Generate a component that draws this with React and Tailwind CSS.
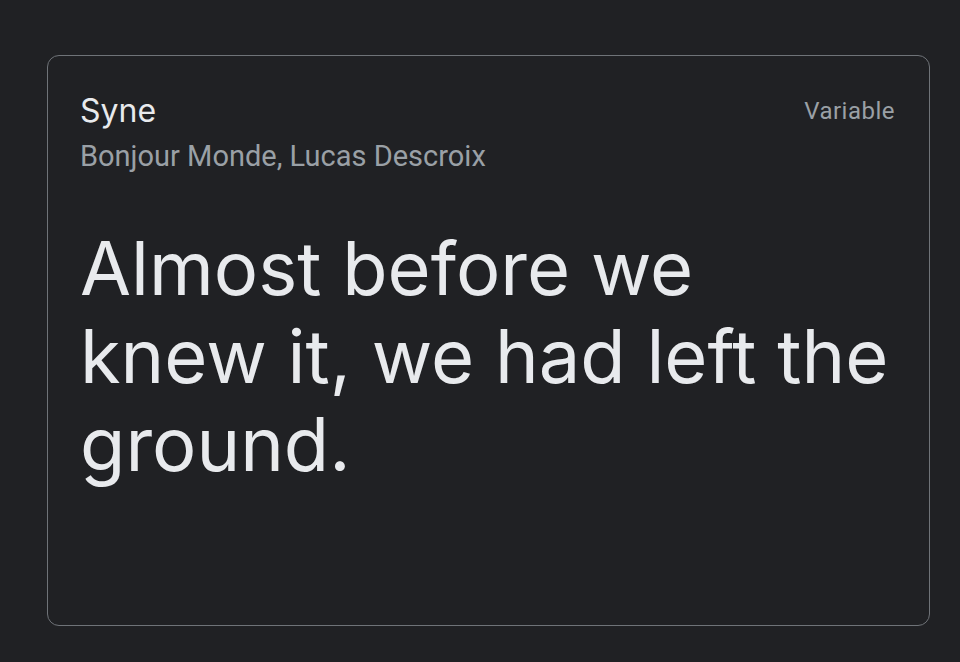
export default function App() {
  return (
    <main className="min-h-screen w-full bg-[#202124] pt-[55px] pl-[47px]">
      <div className="flex h-[571px] w-[883px] flex-col rounded-xl border border-[#6f7378] px-8 pt-[31px]">
        <div className="flex items-start justify-between">
          <div>
            <h2 className="pt-px font-['Inter',sans-serif] text-[32px] leading-[46px] text-[#e8eaed]">Syne</h2>
            <p className="mt-[4px] font-['Roboto',sans-serif] text-[29px] leading-[36px] text-[#9aa0a6]">
              Bonjour Monde, Lucas Descroix
            </p>
          </div>
          <span className="mt-[9px] mr-[2px] font-['Roboto',sans-serif] text-[24px] leading-[30px] tracking-[0.5px] text-[#9aa0a6]">
            Variable
          </span>
        </div>
        <p className="mt-[50px] font-['Inter',sans-serif] text-[74px] leading-[88px] text-[#e8eaed]">
          Almost before we
          <br />
          knew it, we had left the
          <br />
          ground.
        </p>
      </div>
    </main>
  )
}
